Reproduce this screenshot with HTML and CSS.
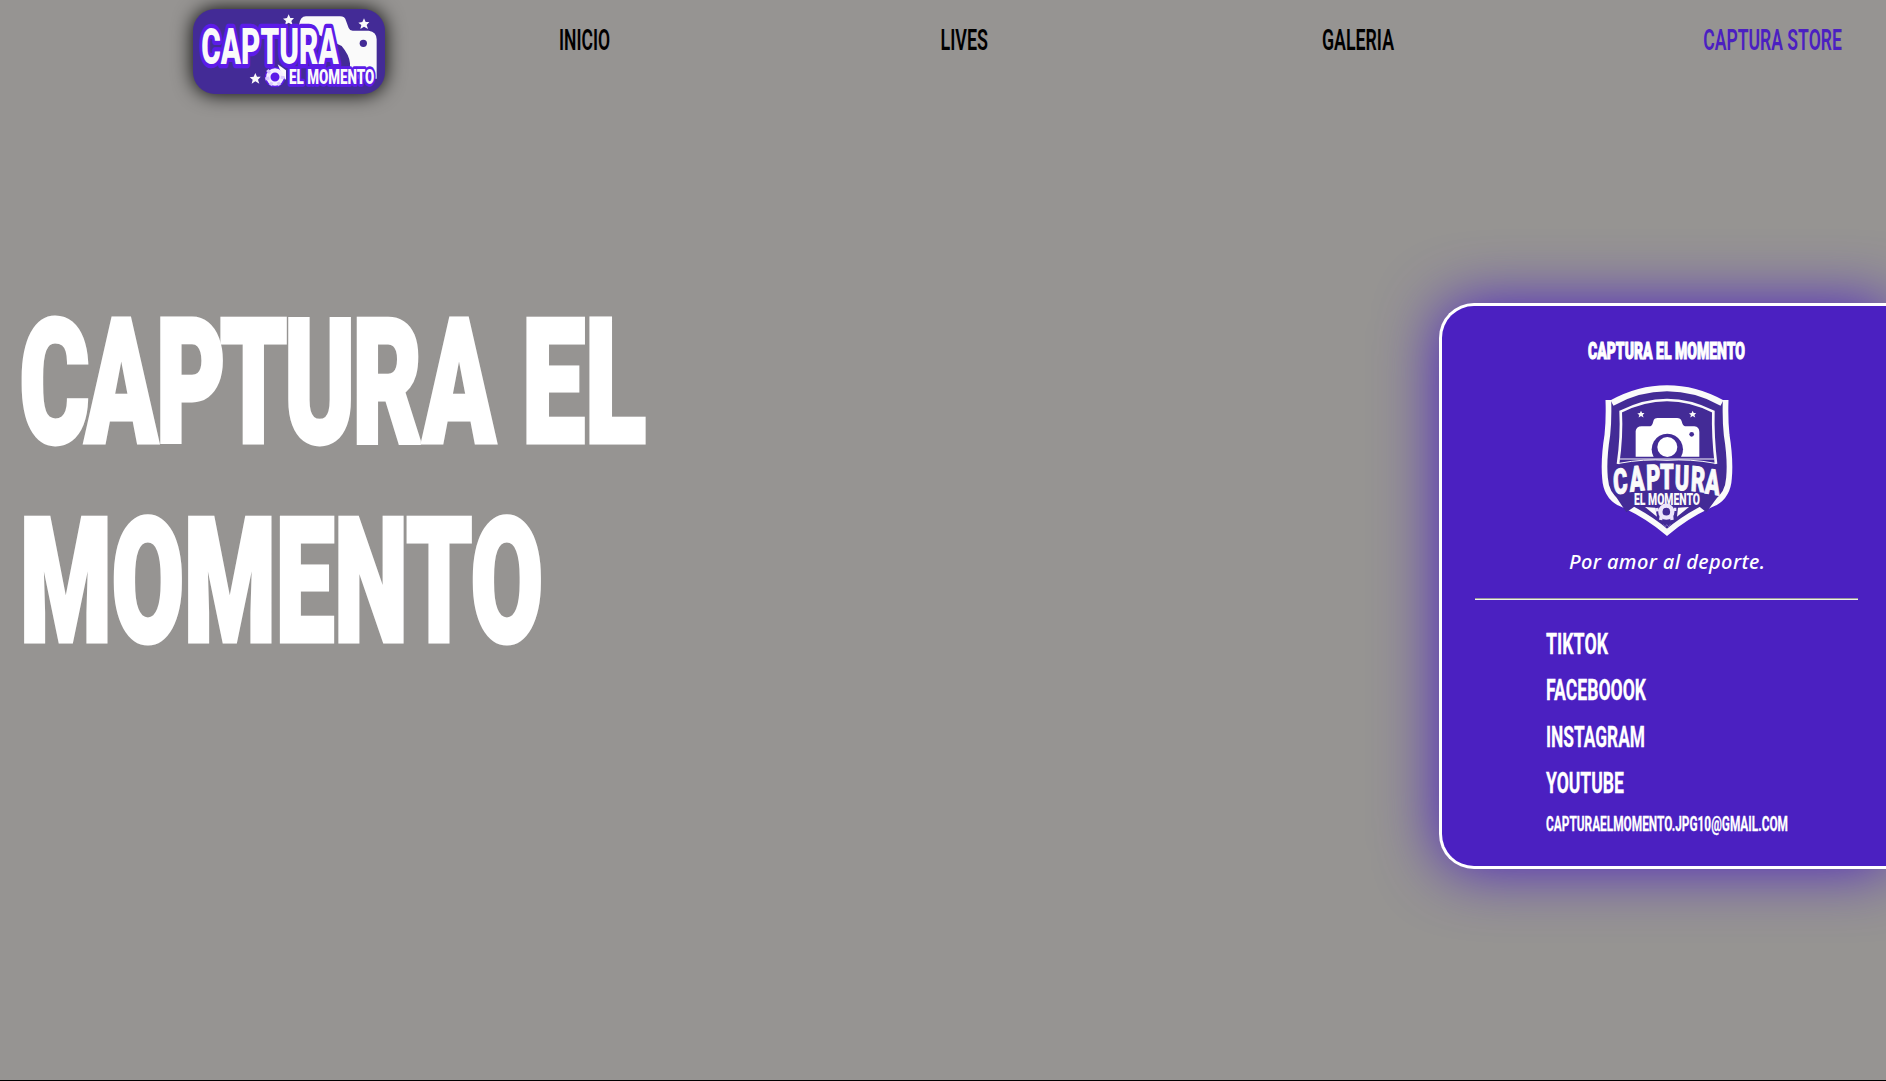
FILE: index.html
```html
<!DOCTYPE html>
<html lang="es">
<head>
<meta charset="utf-8">
<title>Captura el Momento</title>
<link rel="stylesheet" href="styles.css">
</head>
<body>
<header class="header">
  <a class="logo" href="#" aria-label="Captura el Momento">
    <svg viewBox="69 27 576 255" class="logo-art">
      <defs><path id="star" d="M0-17 5-6 16-6 8 3 12 15 0 8-11 15-8 3-17-4-5-6Z"/></defs>
      <path class="paper" d="M387 76Q390 49 408 49H510Q525 49 528 62L536 84Q539 92 548 92H596Q620 96 620 118V236H540V190Q538 165 515 138Z"/>
      <circle cx="580" cy="130" r="11" fill="#432b96"/>
      <use href="#star" class="paper" transform="translate(356 60)"/>
      <use href="#star" class="paper" transform="translate(582 72)"/>
      <use href="#star" class="paper" transform="translate(256 236)"/>
      <text class="logo-word" x="94" y="192" textLength="412" lengthAdjust="spacingAndGlyphs">CAPTURA</text>
      <text class="logo-sub" x="357" y="251" textLength="256" lengthAdjust="spacingAndGlyphs">EL MOMENTO</text>
      <circle cx="315" cy="231" r="31" fill="#5c1be8"/>
      <path d="M323 193 348 211V240L335 222Z" class="paper"/>
      <circle cx="315" cy="231" r="20" fill="none" stroke="#f4efff" stroke-width="13"/>
      <path d="M292 210 300 219M286 237 298 234M301 256 306 247M329 256 324 247M344 233 332 232" stroke="#d9c9ff" stroke-width="9"/>
    </svg>
  </a>
  <nav class="nav">
    <a href="#"><svg class="label" width="51" height="22"><text x="0" y="21.3" textLength="51" lengthAdjust="spacingAndGlyphs">INICIO</text></svg></a>
    <a href="#"><svg class="label" width="47" height="22"><text x="-.5" y="21.3" textLength="47.5" lengthAdjust="spacingAndGlyphs">LIVES</text></svg></a>
    <a href="#"><svg class="label" width="72" height="22"><text x="0" y="21.3" textLength="72" lengthAdjust="spacingAndGlyphs">GALERIA</text></svg></a>
    <a href="#" class="store"><svg class="label" width="138" height="22"><text x="-.7" y="21.3" textLength="138.500" lengthAdjust="spacingAndGlyphs">CAPTURA STORE</text></svg></a>
  </nav>
</header>
<main class="hero">
  <h1 class="title">
    <svg class="title-art" width="660" height="340">
      <text class="title-word" transform="scale(.62 1)" x="31.500 137 251.500 355 458.500 568.500 682" y="138.700">CAPTURA</text>
      <text x="522" y="138.700" textLength="124" lengthAdjust="spacingAndGlyphs">EL</text>
      <text x="20" y="337.700" textLength="523" lengthAdjust="spacingAndGlyphs">MOMENTO</text>
    </svg>
  </h1>
  <aside class="card">
    <h2 class="card-title"><svg class="label" width="157" height="17"><text x="0" y="16.3" textLength="157" lengthAdjust="spacingAndGlyphs">CAPTURA EL MOMENTO</text></svg></h2>
    <svg class="shield" viewBox="125 195 390 453">
      <path d="M144 246Q228 201 320 201Q412 201 496 246Q493 300 501 365Q512 430 508 474Q506 524 467 546Q380 586 320 638Q260 586 173 546Q134 524 132 474Q128 430 139 365Q147 300 144 246Z" fill="#432b96"/>
      <path d="M144 240Q146 300 141 345Q129 420 134 474Q137 526 176 548Q258 584 320 637Q382 584 464 548Q503 526 506 474Q511 420 499 345Q494 300 496 240" fill="none" stroke="#fafafa" stroke-width="17"/>
      <path d="M155 249Q235 205 320 205Q405 205 485 249" fill="none" stroke="#fafafa" stroke-width="18"/>
      <path d="M173 432Q185 350 181 275Q250 240 320 240Q390 240 459 275Q457 350 467 432" fill="none" stroke="#fafafa" stroke-width="8"/>
      <path d="M179 417H461M176 430Q250 416 320 421Q390 416 465 430" fill="none" stroke="#fafafa" stroke-width="3"/>
      <path d="M226 410V333Q228 319 244 319H270Q276 317 279 304Q281 294 292 294H350Q361 294 364 304Q367 317 374 319H402Q417 321 417 336V410Z" fill="#fff"/>
      <path d="M280 411A47 47 0 1 1 362 411Z" fill="#432b96"/>
      <circle cx="321" cy="381" r="30" fill="#fff"/><circle cx="394" cy="343" r="7" fill="#432b96"/>
      <use href="#star" class="paper" transform="translate(242 283) scale(.65)"/>
      <use href="#star" class="paper" transform="translate(397 283) scale(.65)"/>
      <path d="M160 520 198 577 225 558 194 520ZM480 520 438 577 415 558 444 520Z" fill="#432b96"/>
      <text class="shield-word" transform="scale(.62 1)" x="260 337 417 482 553 630 697" y="524 515 510 508 509 512 519" rotate="-6 -4 -2 0 2 4 6">CAPTURA</text>
      <text class="shield-sub" x="221" y="554" textLength="198" lengthAdjust="spacingAndGlyphs">EL MOMENTO</text>
      <path d="M254 561 285 563 290 590ZM386 561 353 563 350 590Z" fill="#fafafa"/>
      <circle cx="318" cy="575" r="18" fill="none" stroke="#ece5fb" stroke-width="13"/>
      <path d="M303 588 301 600M334 588 335 600M295 568 285 570M341 568 348 568" stroke="#ece5fb" stroke-width="10"/>
      <path d="M309 613 314 621 319 614 326 621 330 613" fill="none" stroke="#9380cf" stroke-width="2"/>
    </svg>
    <p class="tagline"><svg class="script" width="195" height="21"><text x="0" y="15" textLength="196">Por amor al deporte.</text></svg></p>
    <hr class="rule">
    <ul class="links">
      <li><svg class="label" width="62" height="22"><text y="21.3" textLength="62" lengthAdjust="spacingAndGlyphs">TIKTOK</text></svg></li>
      <li><svg class="label" width="100" height="22"><text y="21.3" textLength="100" lengthAdjust="spacingAndGlyphs">FACEBOOOK</text></svg></li>
      <li><svg class="label" width="99" height="22"><text y="21.5" textLength="99" lengthAdjust="spacingAndGlyphs">INSTAGRAM</text></svg></li>
      <li><svg class="label" width="78" height="22"><text y="21.5" textLength="78" lengthAdjust="spacingAndGlyphs">YOUTUBE</text></svg></li>
      <li class="mail"><svg class="label" width="242" height="15"><text y="13.2" textLength="242" lengthAdjust="spacingAndGlyphs">CAPTURAELMOMENTO.JPG10@GMAIL.COM</text></svg></li>
    </ul>
  </aside>
</main>
</body>
</html>
```
FILE: styles.css
```css
* { box-sizing: border-box; }
html { height: 100%; overflow: hidden; background: #000; }
body {
  margin: 0;
  height: 1080px;
  overflow: hidden;
  background: #969492;
  font-family: Roboto, "Liberation Sans", sans-serif;
}
svg { display: block; overflow: visible; }
.header { display: flex; height: 303px; padding: 9px 0 0 193px; align-items: flex-start; }
.logo {
  width: 192px;
  height: 85px;
  border-radius: 22px;
  background: #432b96;
  box-shadow: 0 0 20px #000;
}
.logo-art { width: 192px; height: 85px; }
.paper { fill: #fafafa; }
.logo-word, .logo-sub {
  font-weight: 900;
  fill: #fafafa;
  stroke: #5c1be8;
  stroke-linejoin: round;
  paint-order: stroke;
}
.logo-word { font-size: 150px; stroke-width: 26px; }
.logo-sub { font-size: 62px; stroke-width: 16px; }
.nav {
  display: grid;
  grid-template-columns: repeat(3, 381.5px) auto;
  margin: 19.5px 0 0 174px;
  flex: none;
}
.nav a { color: #000; text-decoration: none; }
.nav .store { color: #4b20c1; }
.label { font-size: 30px; font-weight: 700; fill: currentColor; stroke: currentColor; stroke-width: .3px; }
.nav .label { font-weight: 600; stroke-width: 0; }
.hero { display: flex; justify-content: space-between; align-items: flex-start; width: 1891px; }
.title { margin: 0; }
.title-art { font-size: 172px; font-weight: 900; fill: #fff; stroke: #fff; stroke-width: 5px; }
.title-word { vector-effect: non-scaling-stroke; stroke-width: 4px; }
.card {
  width: 452px;
  height: 566px;
  padding: 37px 33px 0;
  border: 3px solid #fff;
  border-right: 0;
  border-radius: 35px 0 0 35px;
  background: #4b20c1;
  color: #fff;
  box-shadow: 0 0 62px #4b20c1;
  display: flex;
  flex-direction: column;
  align-items: center;
}
.card-title { margin: 0; }
.card-title .label { font-size: 23.4px; font-weight: 900; stroke-width: 1.1px; }
.shield { width: 130px; height: 151px; margin-top: 25px; }
.shield-word { font-size: 105px; font-weight: 900; fill: #fafafa; stroke: #fafafa; stroke-width: 3px; }
.shield-sub { font-size: 50px; font-weight: 900; fill: #fafafa; }
.tagline { margin: 18px 0 0; }
.script { font-family: "Noto Sans", sans-serif; font-size: 20px; font-style: italic; font-weight: 500; fill: #fff; }
.rule { width: 383px; height: 2px; margin: 23px 0 0; border: 0; border-top: 1px solid #9a9a9a; border-bottom: 1px solid #eee; }
.links { align-self: flex-start; list-style: none; margin: 32.5px 0 0 71px; padding: 0; display: grid; gap: 24.3px; }
.mail .label { font-size: 19.5px; }
```
